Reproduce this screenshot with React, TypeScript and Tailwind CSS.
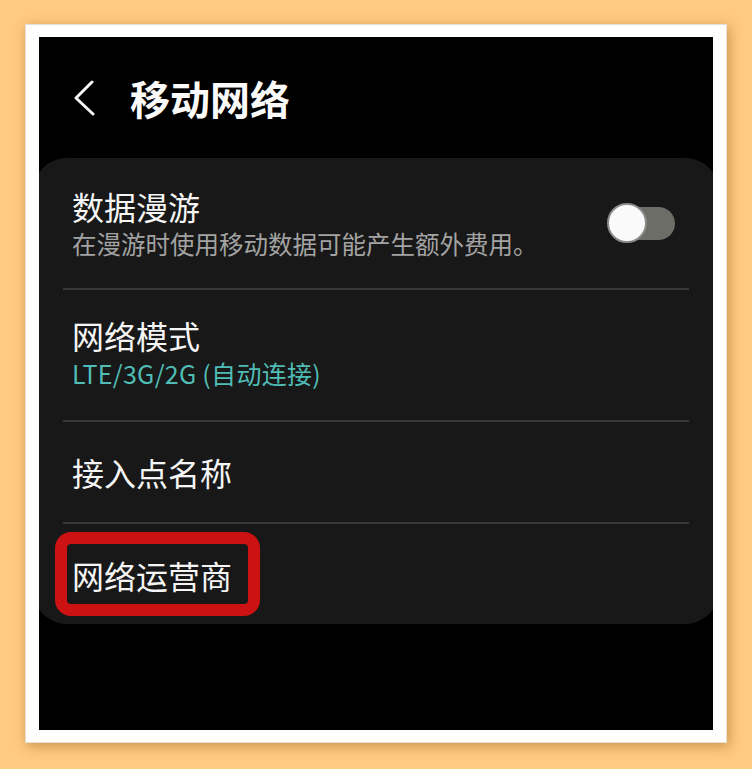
import React from 'react'

const cjk = { fontFamily: '"Noto Sans CJK SC", "Noto Sans", sans-serif' }

function Toggle() {
  return (
    <div className="relative w-[70px] h-[40px] shrink-0">
      <div className="absolute left-[11px] top-[4px] w-[57px] h-[33px] rounded-full bg-[#6c6d67]" />
      <div className="absolute left-0 top-0 w-[40px] h-[40px] rounded-full bg-[#fafafa] border-2 border-[#8a8a88]" />
    </div>
  )
}

function Divider() {
  return <div className="mx-[30px] h-[2px] bg-[#383838]" />
}

export default function App() {
  return (
    <div className="w-[752px] h-[769px] bg-[#fecb80] pt-[24px] pl-[25px]" style={cjk}>
      {/* photo frame */}
      <div className="w-[702px] h-[719px] bg-white pt-[12px] pl-[13px] shadow-[2px_3px_12px_rgba(130,80,10,0.45)] border border-[#e4e0d8]">
        {/* phone screen */}
        <div className="w-[674px] h-[693px] bg-black overflow-hidden flex flex-col">
          {/* header */}
          <div className="h-[121px] flex items-center pl-[34px] pt-[2px] pb-[2px]">
            <svg width="22" height="36" viewBox="0 0 22 36" className="mr-[35px]">
              <path d="M19 2 L3 18 L20 34" fill="none" stroke="#f5f5f5" strokeWidth="3" strokeLinecap="round" strokeLinejoin="round" />
            </svg>
            <h1 className="text-[40px] leading-none font-bold text-[#fafafa]">移动网络</h1>
          </div>

          {/* settings card */}
          <div className="bg-[#181818] rounded-[34px] -mx-[6px] flex flex-col">
            <div className="h-[130px] flex items-center justify-between pl-[39px] pr-[42px]">
              <div className="flex flex-col">
                <span className="text-[32px] leading-[40px] text-[#f5f5f5]">数据漫游</span>
                <span className="text-[24.5px] leading-[34px] text-[#a3a3a3] mt-[1px]">在漫游时使用移动数据可能产生额外费用。</span>
              </div>
              <Toggle />
            </div>
            <Divider />
            <div className="h-[130px] flex flex-col justify-center pl-[39px] pb-[6px]">
              <span className="text-[32px] leading-[40px] text-[#f5f5f5]">网络模式</span>
              <span className="text-[25px] tracking-[0.3px] leading-[34px] text-[#4fbdb5] mt-[1px]">LTE/3G/2G (自动连接)</span>
            </div>
            <Divider />
            <div className="h-[100px] flex items-center pl-[39px]">
              <span className="text-[32px] leading-[40px] text-[#f5f5f5]">接入点名称</span>
            </div>
            <Divider />
            <div className="relative h-[100px] flex items-center pl-[39px] pt-[2px]">
              <span className="text-[32px] leading-[40px] text-[#f5f5f5]">网络运营商</span>
              <div className="absolute left-[22px] top-[8px] w-[205px] h-[84px] rounded-[16px] border-[12px] border-[#cc1212]" />
            </div>
          </div>
        </div>
      </div>
    </div>
  )
}
